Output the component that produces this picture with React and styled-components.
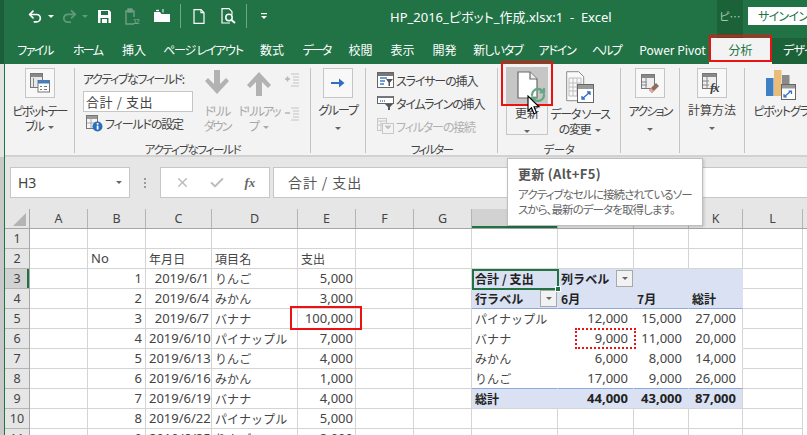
import React from "react";
import styled, { createGlobalStyle } from "styled-components";
import { Undo2, Redo2, RefreshCw, X, Check } from "lucide-react";

const JP = `"Noto Sans CJK JP", "Noto Sans", sans-serif`;
const GREEN = "#217346";

const Global = createGlobalStyle`
  html, body { margin: 0; padding: 0; background: #fff; }
  * { box-sizing: border-box; }
`;

const Page = styled.div`
  position: relative; width: 807px; height: 435px; overflow: hidden; display: flex;
  font-family: ${JP}; font-feature-settings: "palt"; color: #444; letter-spacing: -1.15px;
`;
const Behind = styled.div`
  width: 4px; flex: none;
  background: linear-gradient(#1b5f3a 0 64px, #e4e4e4 64px 157px, #c9c9c9 157px);
`;
const Excel = styled.div`
  width: 803px; flex: none; display: flex; flex-direction: column; border-left: 1px solid ${GREEN};
`;

/* title bar */
const TitleBar = styled.div`
  height: 38px; background: ${GREEN}; display: flex; align-items: center; color: #fff; position: relative;
`;
const Qat = styled.div` display: flex; align-items: center; width: 385px; padding-left: 22px; margin-top: -6px; flex: none; `;
const QatSlot = styled.div`
  width: ${p => p.$w}px; height: 20px; display: flex; align-items: center; justify-content: center; flex: none;
`;
const QatSep = styled.div` width: 1px; height: 24px; background: #6fa588; margin: 0 ${p => p.$m}px; flex: none; `;
const Tri = styled.span`
  display: inline-block; width: 0; height: 0; border-left: 3px solid transparent; border-right: 3px solid transparent;
  border-top: 3px solid ${p => p.$c || "#666"}; flex: none;
`;
const Title = styled.div` font-size: 13px; white-space: pre; font-family: "Noto Sans", ${JP}; letter-spacing: 0; width: 327px; margin-top: -6px; flex: none; `;
const Ellipsis = styled.div`
  width: 26px; height: 38px; background: #1c6239; color: #a9c9b6; font-size: 11px; letter-spacing: 0; display: flex; align-items: center; justify-content: center; flex: none; padding-bottom: 6px;
`;
const SignIn = styled.div`
  width: 59px; height: 18px; margin-left: 5px; margin-top: -6px; background: #fff; color: ${GREEN}; font-size: 12px; padding-left: 10px; line-height: 18px; white-space: nowrap; flex: none; letter-spacing: -.7px;
`;

/* tabs */
const TabBar = styled.div` height: 26px; background: ${GREEN}; display: flex; padding-left: 3px; overflow: hidden; `;
const Tab = styled.div`
  width: ${p => p.$w}px; flex: none; text-align: center; font-size: 12px; line-height: 23px; color: #fff; white-space: pre;
  letter-spacing: ${p => p.$ls ?? 0}px;
`;
const PowerTab = styled(Tab)` padding-left: 6px; `;
const ActiveTab = styled(Tab)` background: #f3f3f3; color: ${GREEN}; `;
const ContextTab = styled(Tab)` background: #1c6239; text-align: left; padding-left: 11px; flex: 1; letter-spacing: -.8px; `;

/* ribbon */
const Ribbon = styled.div`
  height: 93px; background: #f3f3f3; border-bottom: 2px solid #d2d2d2; display: flex; padding-top: 4px; overflow: hidden;
`;
const Group = styled.div`
  width: ${p => p.$w}px; flex: none; height: 85px; display: flex; flex-direction: column; border-right: ${p => p.$last ? "0" : "1px solid #c4c4c4"};
`;
const GroupBody = styled.div` height: 71px; flex: none; display: flex; justify-content: ${p => p.$justify || "center"}; padding-left: ${p => p.$pl || 0}px; `;
const GroupLabel = styled.div`
  font-size: 11.5px; line-height: 14px; text-align: center; color: #444; white-space: nowrap; margin-top: 3px; flex: none;
  letter-spacing: ${p => p.$ls ?? -1.3}px;
`;
const LargeButton = styled.div`
  width: ${p => p.$w || 60}px; flex: none; display: flex; flex-direction: column; align-items: center; position: relative;
`;
const Tile = styled.div`
  width: 30px; height: 30px; border: 1px solid #c6c6c6; background: #f8f8f8; display: flex; align-items: center; justify-content: center;
`;
const BareIcon = styled.div` height: ${p => p.$h || 30}px; display: flex; align-items: center; justify-content: center; `;
const LargeLabel = styled.div`
  margin-top: ${p => p.$mt ?? 5}px; font-size: 12px; line-height: 15px; text-align: center; white-space: nowrap;
  color: ${p => p.$off ? "#a8a8a8" : "#444"};
  letter-spacing: ${p => p.$ls ?? -1.2}px;
`;
const LabelTri = styled(Tri)` margin-left: 5px; vertical-align: middle; `;
const FieldCol = styled.div` width: 116px; flex: none; display: flex; flex-direction: column; `;
const FieldCaption = styled.div` font-size: 12px; line-height: 14px; margin-top: 4px; white-space: nowrap; letter-spacing: -1.45px; `;
const FieldInput = styled.div`
  width: 110px; height: 21px; margin-top: 5px; background: #fff; border: 1px solid #c6c6c6; font-size: 13px; line-height: 19px; padding-left: 2px; letter-spacing: .6px; font-feature-settings: normal; white-space: nowrap;
`;
const SmallRow = styled.div`
  height: ${p => p.$h || 15}px; display: flex; align-items: center; gap: 2px; font-size: 12px; white-space: nowrap;
  color: ${p => p.$off ? "#b0b0b0" : "#444"}; margin-top: ${p => p.$mt || 0}px; padding-left: ${p => p.$pl || 0}px;
`;
const SideIcons = styled.div` display: flex; flex-direction: column; gap: 20px; padding-top: 5px; margin-left: 2px; `;
const DataRefresh = styled(LargeButton)`
  width: 42px; height: 68px; margin-left: 8px; border: 1px solid #c6c6c6; margin-top: -1px;
`;
const RefreshHead = styled.div`
  width: 40px; height: 37px; background: #c6c6c6; position: relative; flex: none;
`;
const RefreshOverlay = styled.div` position: absolute; left: 23px; top: 19px; width: 16px; height: 16px; display: flex; `;

/* formula bar */
const FormulaBar = styled.div`
  height: 52px; background: #e6e6e6; padding: 10px 0 11px 5px; display: flex; align-items: stretch;
`;
const NameBox = styled.div`
  width: 120px; background: #fff; border: 1px solid #c6c6c6; display: flex; align-items: center; justify-content: space-between; padding: 0 7px 0 7px; font: 14px "Noto Sans", sans-serif; color: #444; letter-spacing: 0;
`;
const Grip = styled.div`
  width: 30px; display: flex; flex-direction: column; align-items: center; justify-content: center; gap: 2px; flex: none;
`;
const GripDot = styled.span` width: 2px; height: 2px; background: #9a9a9a; `;
const FxBox = styled.div`
  width: 110px; background: #fff; border: 1px solid #c6c6c6; display: flex; align-items: center; justify-content: space-around; padding: 0 4px; flex: none; color: #bcbcbc;
`;
const FxText = styled.span` font: italic bold 13px "Liberation Serif", serif; color: #666; letter-spacing: 0; `;
const FormulaInput = styled.div`
  flex: 1; margin-left: 3px; background: #fff; border: 1px solid #c6c6c6; border-right: 0; font-size: 14px; line-height: 28px; padding-left: 14px; letter-spacing: .9px; font-feature-settings: normal; color: #555;
`;

/* sheet */
const COLS = "25px 58px 58px 66px 86px 58px 58px 58px 86px 76px 55px 54px 60px";
const Sheet = styled.div` flex: 1; background: #fff; overflow: hidden; letter-spacing: 0; `;
const HeaderRow = styled.div`
  display: grid; grid-template-columns: ${COLS}; height: 20px; background: #e6e6e6; border-bottom: 1px solid #a6a6a6;
`;
const ColHead = styled.div`
  border-right: 1px solid #b4b4b4; font: 12.5px/19px "Noto Sans", sans-serif; text-align: center; color: #444;
  background: ${p => p.$sel ? "#d2d2d2" : "transparent"};
  box-shadow: ${p => p.$sel ? `inset 0 -2px 0 ${GREEN}` : "none"};
`;
const Corner = styled.div`
  border-right: 1px solid #a6a6a6; display: flex; align-items: flex-end; justify-content: flex-end; padding: 0 3px 2px 0; 
`;
const CornerMark = styled.div`
  width: 0; height: 0; border-left: 13px solid transparent; border-bottom: 13px solid #b4b4b4;
`;
const Row = styled.div` display: grid; grid-template-columns: ${COLS}; height: 20px; `;
const RowHead = styled.div`
  background: ${p => p.$sel ? "#d2d2d2" : "#e6e6e6"}; border-right: 1px solid #a6a6a6; border-bottom: 1px solid #b4b4b4;
  font: 12.5px/19px "Noto Sans", sans-serif; text-align: center; color: #444;
  box-shadow: ${p => p.$sel ? `inset -2px 0 0 ${GREEN}` : "none"};
`;
const Cell = styled.div`
  position: relative; white-space: nowrap; overflow: visible; height: 20px;
  background: ${p => p.$bg || "#fff"};
  border-right: 1px solid ${p => p.$nr ? "transparent" : "#d4d4d4"};
  border-bottom: 1px solid ${p => p.$line ? "#8ea9db" : p.$nb ? "transparent" : "#d4d4d4"};
  font: ${p => p.$b ? "bold " : ""}13px/19px ${p => p.$jp ? JP : `"Noto Sans", sans-serif`};
  font-size: ${p => p.$jp ? "12px" : "13px"};
  font-feature-settings: normal;
  letter-spacing: ${p => p.$jp ? ".1px" : "0"};
  text-align: ${p => p.$r ? "right" : "left"};
  padding: 0 ${p => p.$pr ?? 3}px 0 ${p => p.$pl ?? 3}px;
  color: ${p => p.$b ? "#222" : "#444"};
`;
const FilterBtn = styled.span`
  position: absolute; right: ${p => p.$right}px; top: 1px; width: 17px; height: 17px; background: #f2f2f2; border: 1px solid #a8a8a8; display: flex; align-items: center; justify-content: center;
`;

/* overlays */
const Tooltip = styled.div`
  position: absolute; left: 507px; top: 158px; width: 196px; height: 68px; background: #fff; border: 1px solid #bfbfbf; box-shadow: 1px 1px 3px rgba(0,0,0,.18); padding: 6px 10px; z-index: 5;
`;
const TipTitle = styled.div` font-size: 13px; font-weight: 700; line-height: 17px; color: #555; letter-spacing: .3px; `;
const TipText = styled.div` font-size: 11.5px; line-height: 15px; margin-top: 5px; color: #666; white-space: nowrap; letter-spacing: -.92px; `;
const RedBox = styled.div`
  position: absolute; left: ${p => p.$x}px; top: ${p => p.$y}px; width: ${p => p.$w}px; height: ${p => p.$h}px;
  border: 2px ${p => p.$dot ? "dotted" : "solid"} #ee1111; z-index: 6; pointer-events: none;
`;
const SelBox = styled.div`
  position: absolute; left: 472px; top: 269px; width: 87px; height: 21px; border: 2px solid ${GREEN}; z-index: 4;
`;
const Handle = styled.span`
  position: absolute; right: -4px; bottom: -4px; width: 6px; height: 6px; background: ${GREEN}; border: 1px solid #fff;
`;
const Cursor = styled.svg` position: absolute; left: 527px; top: 95px; z-index: 7; `;

/* icons */
const Save = () => (
  <svg width="15" height="15" viewBox="0 0 15 15"><path d="M1 1h11l2 2v11H1z" fill="#fff"/><rect x="4" y="2" width="7" height="4" fill={GREEN}/><rect x="3.5" y="9" width="8" height="5" fill={GREEN}/><rect x="5" y="10" width="5" height="4" fill="#fff"/></svg>
);
const Clip12 = () => (
  <svg width="16" height="17" viewBox="0 0 16 17" fill="none" stroke="#6f9f85" strokeWidth="1.4"><path d="M3 3H1v13h8M7 3h2v6"/><rect x="3" y="1" width="4" height="3" fill="#6f9f85"/><text x="8" y="16" fontSize="7" stroke="none" fill="#8fb5a0" fontFamily="Liberation Sans">12</text></svg>
);
const Folder = () => (
  <svg width="16" height="14" viewBox="0 0 16 14"><path d="M0 3h6l1.5 2H16v8H0z" fill="#fff"/><path d="M2 1.5h3" stroke="#fff" strokeWidth="1.4"/><path d="M9 3.5V0" stroke="#fff" strokeWidth="1"/></svg>
);
const DocWhite = () => (
  <svg width="12" height="15" viewBox="0 0 12 15" fill="none" stroke="#fff" strokeWidth="1.2"><path d="M1 .7h7l3 3v10.6H1z"/><path d="M8 .7v3h3"/></svg>
);
const Preview = () => (
  <svg width="16" height="16" viewBox="0 0 16 16" fill="none" stroke="#fff" strokeWidth="1.2"><path d="M9 15H1V.7h7l3 3v3"/><circle cx="8" cy="9.5" r="3.2" strokeWidth="1.5"/><path d="M10.5 12l3.5 3" strokeWidth="2"/></svg>
);
const Customize = () => (
  <svg width="8" height="8" viewBox="0 0 8 8"><rect x="1" y="1" width="6" height="1.2" fill="#fff"/><path d="M1 4h6L4 7z" fill="#fff"/></svg>
);
const PivotIcon = () => (
  <svg width="22" height="22" viewBox="0 0 22 22"><rect x="1.5" y="1.5" width="12" height="14" fill="#e8e8e8" stroke="#777"/><rect x="2" y="2" width="11" height="3" fill="#888"/><rect x="4" y="6" width="1" height="9" fill="#888"/><rect x="9" y="8.5" width="11.5" height="11.5" fill="#fff" stroke="#777"/><rect x="9" y="8.5" width="11.5" height="3" fill="#3f7fc4"/><path d="M11 14h2v1h-2zm4 0h3v1h-3zm-4 3h2v1h-2zm4 0h3v1h-3z" fill="#777"/></svg>
);
const SettingsIcon = () => (
  <svg width="17" height="17" viewBox="0 0 17 17"><rect x=".5" y=".5" width="11" height="13" fill="#f5f5f5" stroke="#777"/><rect x="1" y="1" width="10" height="3" fill="#999"/><path d="M1 8h10M5 4v9" stroke="#aaa"/><circle cx="11.5" cy="11.5" r="5" fill="#2a6fb8"/><rect x="10.7" y="10.5" width="1.8" height="4" fill="#fff"/><rect x="10.7" y="8" width="1.8" height="1.6" fill="#fff"/></svg>
);
const DrillDown = () => (
  <svg width="24" height="26" viewBox="0 0 24 26"><path d="M9 0h6v14l6-6 3 3-12 13L0 11l3-3 6 6z" fill="#b2b2b2"/></svg>
);
const DrillUp = () => (
  <svg width="24" height="26" viewBox="0 0 24 26"><path d="M9 26h6V12l6 6 3-3L12 2 0 15l3 3 6-6z" fill="#b2b2b2"/></svg>
);
const Expand = ({ minus }) => (
  <svg width="14" height="14" viewBox="0 0 14 14" fill="none"><path d="M0 6h5" stroke="#b8b8b8" strokeWidth="1.6"/>{!minus && <path d="M2.5 3.5v5" stroke="#b8b8b8" strokeWidth="1.6"/>}<path d="M6 1h8M8 4h6M8 7h6M8 10h6M6 13h8" stroke="#c4c4c4"/></svg>
);
const GroupArrow = () => (
  <svg width="14" height="12" viewBox="0 0 14 12"><path d="M0 5h8V1.5L13.5 6 8 10.5V7H0z" fill="#2f6fc0"/></svg>
);
const SlicerIcon = () => (
  <svg width="17" height="16" viewBox="0 0 17 16"><rect x=".5" y=".5" width="16" height="15" fill="#fff" stroke="#666"/><rect x="1" y="1" width="15" height="3" fill="#777"/><path d="M3 6h7M3 9h5M3 12h4" stroke="#3f7fc4" strokeWidth="1.5"/><path d="M9 7h7l-3 3.5V14h-1.5v-3.5z" fill="#555"/></svg>
);
const TimelineIcon = () => (
  <svg width="17" height="16" viewBox="0 0 17 16"><rect x=".5" y="1.5" width="16" height="7" fill="#fff" stroke="#666"/><rect x="1" y="1" width="15" height="2" fill="#777"/><path d="M3 6h6" stroke="#3f7fc4" strokeWidth="1.5" strokeDasharray="1 1"/><path d="M8 9h8l-3 3v3h-2v-3z" fill="#555"/></svg>
);
const ConnectIcon = () => (
  <svg width="17" height="16" viewBox="0 0 17 16" fill="none" stroke="#c8c8c8"><rect x=".5" y=".5" width="9" height="12"/><path d="M1 3h8M4 3v9M1 7h8"/><rect x="5.5" y="5.5" width="11" height="10" fill="#f3f3f3"/><path d="M8 8h6l-3 3z" fill="#c0c0c0"/></svg>
);
const BigDoc = () => (
  <svg width="21" height="28" viewBox="0 0 21 28"><path d="M1 1h12l7 7v19H1z" fill="#fff" stroke="#6a6a6a" strokeWidth="1.2"/><path d="M13 1v7h7" fill="#f0f0f0" stroke="#6a6a6a" strokeWidth="1.2"/></svg>
);
const SourceIcon = () => (
  <svg width="28" height="32" viewBox="0 0 28 32"><path d="M.7.7h12l5 5v24H.7z" fill="#fafafa" stroke="#8a8a8a"/><path d="M3 7h12v18H3zM7 7v18M11 7v18M3 12h12M3 16h12M3 20h12" fill="none" stroke="#bdbdbd"/><rect x="11.5" y="13.5" width="16" height="18" fill="#fff" stroke="#666"/><rect x="12" y="14" width="15" height="4" fill="#999"/><path d="M16 28l8-7M21 21h3v3M16 25v3h3" fill="none" stroke="#2f6fc0" strokeWidth="1.3"/></svg>
);
const ActionIcon = () => (
  <svg width="22" height="22" viewBox="0 0 22 22"><rect x="2.5" y="2.5" width="13" height="14" fill="#eee" stroke="#777"/><rect x="3" y="3" width="12" height="3" fill="#888"/><path d="M7 6v10M3 10h5M3 13h5" stroke="#888"/><path d="M10 18l7-7 3 3-7 7z" fill="#8c6d60"/><path d="M10 18l2-2 3 3-2 2z" fill="#e8a49a"/></svg>
);
const CalcIcon = () => (
  <svg width="23" height="22" viewBox="0 0 23 22"><rect x="1.5" y="1.5" width="14" height="15" fill="#eee" stroke="#777"/><rect x="2" y="2" width="13" height="3" fill="#888"/><path d="M6 5v11M2 9h6M2 13h6" stroke="#888"/><text x="9" y="20" fontFamily="Liberation Serif" fontStyle="italic" fontWeight="bold" fontSize="13" fill="#444">fx</text></svg>
);
const ChartIcon = () => (
  <svg width="30" height="30" viewBox="0 0 30 30"><rect x="0" y="8" width="7.5" height="18" fill="#3f7fc4"/><rect x="8" y="0" width="7.5" height="26" fill="#e9bd78"/><rect x="16" y="5" width="7.5" height="10" fill="#8a8a8a"/><rect x="15.5" y="14.5" width="14" height="15" fill="#fff" stroke="#666"/><rect x="16" y="15" width="13" height="3.5" fill="#999"/><path d="M18 27l7-6M22.5 21h3v3M18 24v3h3" fill="none" stroke="#2f6fc0" strokeWidth="1.2"/></svg>
);

const TABS = [
  ["ファイル", 54, -1.5], ["ホーム", 51, -1.7], ["挿入", 42, 0], ["ページ レイアウト", 96, -1.2], ["数式", 42, 0], ["データ", 47, -2], ["校閲", 41, 0],
  ["表示", 43, 0], ["開発", 41, 0], ["新しいタブ", 66, -1], ["アドイン", 52, -1.2], ["ヘルプ", 47, -1.8],
];
const HEADS = ["A", "B", "C", "D", "E", "F", "G", "H", "I", "J", "K", "L"];
const LEDGER = [
  [],
  [{ t: "No" }, { t: "年月日", jp: 1 }, { t: "項目名", jp: 1 }, { t: "支出", jp: 1 }],
  ["1", "2019/6/1", "りんご", "5,000"],
  ["2", "2019/6/4", "みかん", "3,000"],
  ["3", "2019/6/7", "バナナ", "100,000"],
  ["4", "2019/6/10", "パイナップル", "7,000"],
  ["5", "2019/6/13", "りんご", "4,000"],
  ["6", "2019/6/16", "みかん", "1,000"],
  ["7", "2019/6/19", "バナナ", "4,000"],
  ["8", "2019/6/22", "パイナップル", "5,000"],
  ["9", "2019/6/25", "りんご", "2,000"],
];
const BAND = "#d9e1f2";
const PIVOT = {
  4: ["パイナップル", "12,000", "15,000", "27,000"],
  5: ["バナナ", "9,000", "11,000", "20,000"],
  6: ["みかん", "6,000", "8,000", "14,000"],
  7: ["りんご", "17,000", "9,000", "26,000"],
};

const Ledger = ({ row }) => {
  const r = LEDGER[row];
  if (!r || r.length === 0) return <><Cell /><Cell /><Cell /><Cell /></>;
  if (typeof r[0] === "object") {
    return r.map((c, i) => <Cell key={i} $jp={c.jp}>{c.t}</Cell>);
  }
  return (
    <>
      <Cell $r>{r[0]}</Cell>
      <Cell $r $pr={2}>{r[1]}</Cell>
      <Cell $jp>{r[2]}</Cell>
      <Cell $r $pr={2}>{r[3]}</Cell>
    </>
  );
};

const Pivot = ({ row }) => {
  if (row === 2) return (
    <>
      <Cell $jp $b $bg={BAND} $nb $nr>合計 / 支出</Cell>
      <Cell $jp $b $bg={BAND} $nb $nr>列ラベル<FilterBtn $right={0}><Tri /></FilterBtn></Cell>
      <Cell $bg={BAND} $nb $nr />
      <Cell $bg={BAND} $nb $nr />
    </>
  );
  if (row === 3) return (
    <>
      <Cell $jp $b $bg={BAND} $line $nr>行ラベル<FilterBtn $right={0}><Tri /></FilterBtn></Cell>
      <Cell $jp $b $bg={BAND} $line $nr>6月</Cell>
      <Cell $jp $b $bg={BAND} $line $nr>7月</Cell>
      <Cell $jp $b $bg={BAND} $line $nr>総計</Cell>
    </>
  );
  if (PIVOT[row]) {
    const v = PIVOT[row];
    return (
      <>
        <Cell $jp $nb={row !== 7} $line={row === 7} $nr>{v[0]}</Cell>
        <Cell $r $pr={5} $nb={row !== 7} $line={row === 7} $nr>{v[1]}</Cell>
        <Cell $r $pr={6} $nb={row !== 7} $line={row === 7} $nr>{v[2]}</Cell>
        <Cell $r $pr={6} $nb={row !== 7} $line={row === 7}>{v[3]}</Cell>
      </>
    );
  }
  if (row === 8) return (
    <>
      <Cell $jp $b $bg={BAND} $nr>総計</Cell>
      <Cell $r $b $pr={5} $bg={BAND} $nr>44,000</Cell>
      <Cell $r $b $pr={6} $bg={BAND} $nr>43,000</Cell>
      <Cell $r $b $pr={6} $bg={BAND}>87,000</Cell>
    </>
  );
  return <><Cell /><Cell /><Cell /><Cell /></>;
};

export default function App() {
  return (
    <Page>
      <Global />
      <Behind />
      <Excel>
        <TitleBar>
          <Qat>
            <QatSlot $w={16}><Undo2 size={17} strokeWidth={2.6} color="#fff" /></QatSlot>
            <QatSlot $w={15}><Tri $c="#fff" /></QatSlot>
            <QatSlot $w={22}><Redo2 size={17} strokeWidth={2.6} color="#5f9a7a" /></QatSlot>
            <QatSlot $w={10}><Tri $c="#5f9a7a" /></QatSlot>
            <QatSlot $w={28}><Save /></QatSlot>
            <QatSlot $w={30}><Clip12 /></QatSlot>
            <QatSlot $w={27}><Folder /></QatSlot>
            <QatSep $m={5} />
            <QatSlot $w={25}><DocWhite /></QatSlot>
            <QatSlot $w={35}><Preview /></QatSlot>
            <QatSep $m={0} />
            <QatSlot $w={34}><Customize /></QatSlot>
          </Qat>
          <Title>HP_2016_ピボット_作成.xlsx:1  -  Excel</Title>
          <Ellipsis>ピ…</Ellipsis>
          <SignIn>サインイン</SignIn>
        </TitleBar>
        <TabBar>
          {TABS.map(([t, w, ls]) => <Tab key={t} $w={w} $ls={ls}>{t}</Tab>)}
          <PowerTab $w={79}>Power Pivot</PowerTab>
          <ActiveTab $w={63}>分析</ActiveTab>
          <ContextTab $w={35}>デザイ</ContextTab>
        </TabBar>
        <Ribbon>
          <Group $w={70}>
            <GroupBody>
              <LargeButton $w={68}>
                <Tile><PivotIcon /></Tile>
                <LargeLabel $ls={-1.6}>ピボットテー<br />ブル<LabelTri /></LargeLabel>
              </LargeButton>
            </GroupBody>
          </Group>
          <Group $w={236}>
            <GroupBody $justify="flex-start" $pl={8}>
              <FieldCol>
                <FieldCaption>アクティブなフィールド:</FieldCaption>
                <FieldInput>合計 / 支出</FieldInput>
                <SmallRow $mt={3} $h={17} $pl={3}><SettingsIcon />フィールドの設定</SmallRow>
              </FieldCol>
              <LargeButton $w={36}>
                <BareIcon><DrillDown /></BareIcon>
                <LargeLabel $off $ls={-1.9}>ドリル<br />ダウン</LargeLabel>
              </LargeButton>
              <LargeButton $w={48}>
                <BareIcon><DrillUp /></BareIcon>
                <LargeLabel $off $ls={-2}>ドリルアッ<br />プ<LabelTri $c="#aaa" /></LargeLabel>
              </LargeButton>
              <SideIcons><Expand /><Expand minus /></SideIcons>
            </GroupBody>
            <GroupLabel>アクティブなフィールド</GroupLabel>
          </Group>
          <Group $w={55}>
            <GroupBody>
              <LargeButton $w={54}>
                <Tile><GroupArrow /></Tile>
                <LargeLabel $mt={4}>グループ<br /><Tri /></LargeLabel>
              </LargeButton>
            </GroupBody>
          </Group>
          <Group $w={132}>
            <GroupBody $justify="flex-start" $pl={11}>
              <div>
                <SmallRow $h={18} $mt={3}><SlicerIcon />スライサーの挿入</SmallRow>
                <SmallRow $h={18} $mt={5}><TimelineIcon />タイムラインの挿入</SmallRow>
                <SmallRow $h={18} $mt={5} $off><ConnectIcon />フィルターの接続</SmallRow>
              </div>
            </GroupBody>
            <GroupLabel $ls={-1.8}>フィルター</GroupLabel>
          </Group>
          <Group $w={123}>
            <GroupBody $justify="flex-start">
              <DataRefresh>
                <RefreshHead>
                  <BareIcon $h={34}><BigDoc /></BareIcon>
                  <RefreshOverlay><RefreshCw size={16} strokeWidth={3.4} color="#63a882" /></RefreshOverlay>
                </RefreshHead>
                <LargeLabel $mt={0} $ls={0}>更新<br /><Tri /></LargeLabel>
              </DataRefresh>
              <LargeButton $w={64}>
                <BareIcon $h={38}><SourceIcon /></BareIcon>
                <LargeLabel $mt={0} $ls={-1.3}>データ ソース<br />の変更<LabelTri /></LargeLabel>
              </LargeButton>
            </GroupBody>
            <GroupLabel $ls={-.5}>データ</GroupLabel>
          </Group>
          <Group $w={59}>
            <GroupBody>
              <LargeButton $w={58}>
                <Tile><ActionIcon /></Tile>
                <LargeLabel $ls={-1.8}>アクション<br /><Tri /></LargeLabel>
              </LargeButton>
            </GroupBody>
          </Group>
          <Group $w={65}>
            <GroupBody>
              <LargeButton $w={62}>
                <Tile><CalcIcon /></Tile>
                <LargeLabel $mt={4} $ls={0}>計算方法<br /><Tri /></LargeLabel>
              </LargeButton>
            </GroupBody>
          </Group>
          <Group $w={62} $last>
            <GroupBody $justify="flex-start" $pl={10}>
              <LargeButton $w={52}>
                <BareIcon $h={34}><ChartIcon /></BareIcon>
                <LargeLabel $mt={1}>ピボットグラ</LargeLabel>
              </LargeButton>
            </GroupBody>
          </Group>
        </Ribbon>
        <FormulaBar>
          <NameBox>H3<Tri $c="#666" /></NameBox>
          <Grip><GripDot /><GripDot /><GripDot /></Grip>
          <FxBox>
            <X size={15} strokeWidth={2.4} />
            <Check size={16} strokeWidth={3} />
            <FxText>fx</FxText>
          </FxBox>
          <FormulaInput>合計 / 支出</FormulaInput>
        </FormulaBar>
        <Sheet>
          <HeaderRow>
            <Corner><CornerMark /></Corner>
            {HEADS.map(h => <ColHead key={h} $sel={h === "H"}>{h}</ColHead>)}
          </HeaderRow>
          {Array.from({ length: 11 }, (_, i) => (
            <Row key={i}>
              <RowHead $sel={i === 2}>{i + 1}</RowHead>
              <Cell />
              <Ledger row={i} />
              <Cell />
              <Cell />
              <Pivot row={i} />
              <Cell />
            </Row>
          ))}
        </Sheet>
      </Excel>
      <Tooltip>
        <TipTitle>更新 (Alt+F5)</TipTitle>
        <TipText>アクティブなセルに接続されているソー<br />スから、最新のデータを取得します。</TipText>
      </Tooltip>
      <SelBox><Handle /></SelBox>
      <RedBox $x={709} $y={35} $w={63} $h={27} />
      <RedBox $x={501} $y={61} $w={52} $h={45} />
      <RedBox $x={290} $y={306} $w={72} $h={24} />
      <RedBox $x={575} $y={328} $w={61} $h={21} $dot />
      <Cursor width="14" height="20" viewBox="0 0 14 20"><path d="M1 1v15l3.5-3.2 2.5 6 2.5-1-2.5-6H12z" fill="#fff" stroke="#000" strokeWidth="1.1" /></Cursor>
    </Page>
  );
}
